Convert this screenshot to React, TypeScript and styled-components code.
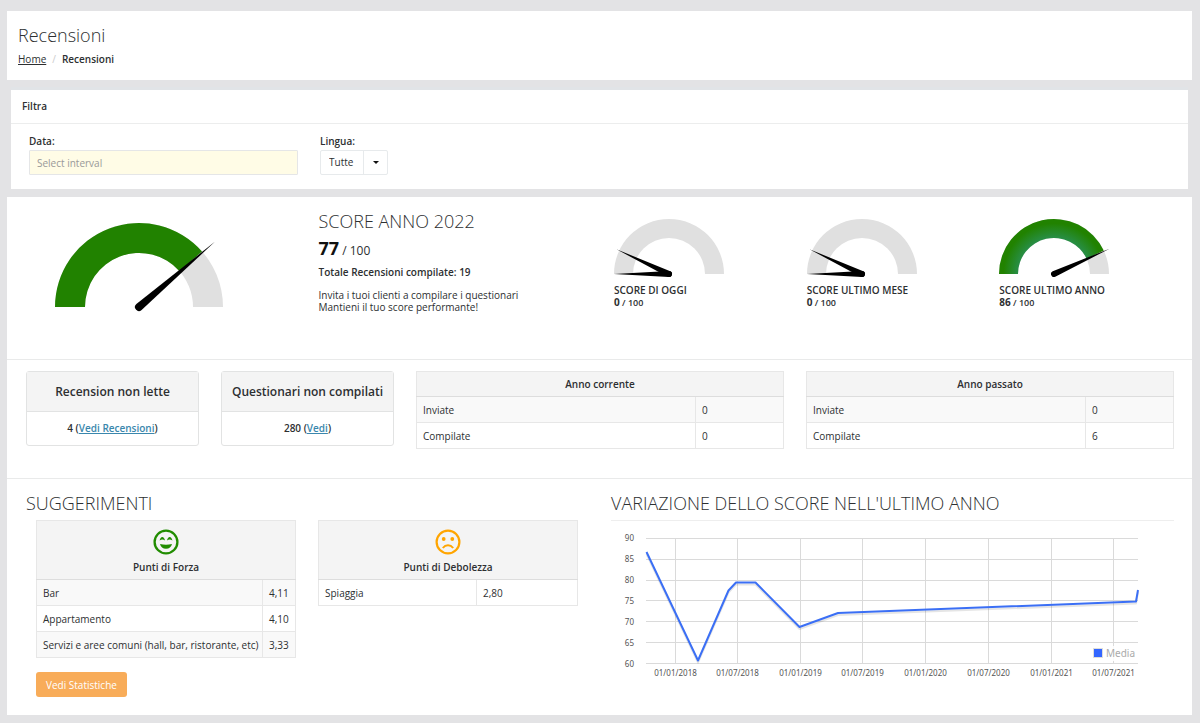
import React, { useId } from "react";
import styled, { createGlobalStyle } from "styled-components";

const GlobalStyle = createGlobalStyle`
  *, *::before, *::after { box-sizing: border-box; }
  body {
    margin: 0;
    background: #e3e3e5;
    color: #2d2f31;
    font-family: "Open Sans", "Noto Sans", "Liberation Sans", sans-serif;
    font-size: 10px;
    line-height: 14px;
  }
  h1, h2, h3, p, ol { margin: 0; padding: 0; }
`;

const Page = styled.div`
  display: flex;
  flex-direction: column;
  padding: 11px 8px 8px 7px;
`;

const PageHeader = styled.header`
  padding: 12px 11px 14px;
  background: #fff;
`;

const Title = styled.h1`
  font-size: 18px;
  font-weight: 300;
  line-height: 24px;
`;

const Breadcrumb = styled.ol`
  display: flex;
  padding-top: 5px;
  list-style: none;
  line-height: 14px;

  li + li::before {
    content: "/";
    padding: 0 6px;
    color: #ccc;
    font-weight: 400;
  }
  li[aria-current] { font-weight: 600; }
  a { color: inherit; }
`;

const FilterPanel = styled.section`
  margin: 7px 4px 8px;
  border-top: 3px solid #e1e4e7;
  background: #fff;
`;

const FilterTitle = styled.h2`
  padding: 9px 11px 10px;
  border-bottom: 1px solid #eceded;
  font-size: 10px;
  font-weight: 600;
  line-height: 14px;
`;

const FilterForm = styled.form`
  display: flex;
  gap: 22px;
  padding: 10px 18px 14px;
`;

const Field = styled.div`
  display: flex;
  flex-direction: column;
  gap: 2px;
`;

const FieldLabel = styled.label`
  font-weight: 600;
  line-height: 14px;
`;

const DateInput = styled.input`
  width: 269px;
  height: 25px;
  padding: 0 7px;
  border: 1px solid #e5e6e7;
  border-radius: 1px;
  background: #fffce6;
  font: inherit;

  &::placeholder { color: #999; opacity: 1; }
`;

const SelectBox = styled.div`
  position: relative;
  width: 68px;
`;

const LanguageSelect = styled.select`
  width: 100%;
  height: 25px;
  padding: 0 26px 1px 8px;
  appearance: none;
  border: 1px solid #e7eaec;
  border-radius: 2px;
  background: #fff;
  color: inherit;
  font: inherit;
`;

const Caret = styled.span`
  position: absolute;
  inset: 0 0 0 auto;
  display: grid;
  place-items: center;
  width: 25px;
  border-left: 1px solid #e7eaec;
  pointer-events: none;

  &::before {
    content: "";
    border: 3px solid transparent;
    border-top-color: #111;
    border-bottom: 0;
  }
`;

const Dashboard = styled.main`
  background: #fff;
`;

const Row = styled.section<{ $height: number }>`
  display: grid;
  grid-template-columns: repeat(12, minmax(0, 1fr));
  align-items: start;
  column-gap: 22px;
  min-height: ${(p) => p.$height}px;
  padding: 11px 18px 17px 19px;

  & + & { border-top: 1px solid #e9eaea; }
`;

const Col = styled.div<{ $span: number }>`
  grid-column: span ${(p) => p.$span};
`;

const WideCol = styled(Col)`
  padding-top: 1px;
`;

const GaugeCol = styled(Col)`
  display: flex;
  justify-content: center;
  padding: 15px 44px 0 0;
`;

const GaugeSvg = styled.svg`
  display: block;
  overflow: visible;
`;

const ScoreCol = styled(Col)`
  padding-top: 1px;
`;

const SectionTitle = styled.h2`
  font-size: 18px;
  font-weight: 300;
  line-height: 24px;
`;

const Score = styled.p`
  padding: 3px 0 2px;
  font-size: 12px;
  line-height: 24px;

  strong { font-size: 18px; font-weight: 700; color: #111; }
`;

const Total = styled.p`
  padding-bottom: 10px;
  font-weight: 600;
  line-height: 14px;
`;

const Invite = styled.p`
  line-height: 12px;
`;

const MiniGauges = styled(Col)`
  display: grid;
  grid-template-columns: repeat(3, minmax(0, 1fr));
  padding: 11px 0 0 3px;
  column-gap: 18px;
`;

const MiniLabel = styled.h3`
  padding-top: 9px;
  font-size: 10px;
  font-weight: 600;
  line-height: 12px;
`;

const MiniScore = styled.p`
  font-size: 9px;
  font-weight: 600;
  line-height: 12px;

  strong { font-size: 10px; font-weight: 700; }
`;

const Card = styled.article`
  border: 1px solid #e2e3e3;
  border-radius: 3px;
  text-align: center;
`;

const CardTitle = styled.h3`
  border-bottom: 1px solid #e2e3e3;
  background: #f4f4f4;
  font-size: 12px;
  font-weight: 600;
  line-height: 39px;
`;

const CardBody = styled.p`
  font-weight: 600;
  line-height: 33px;

  a { color: #3a87ad; }
`;

const DataTable = styled.table<{ $valueWidth: string }>`
  width: 100%;
  border-collapse: collapse;
  table-layout: fixed;

  col:last-child { width: ${(p) => p.$valueWidth}; }
  th, td {
    height: 26px;
    padding: 5px 6px;
    border: 1px solid #e7e7e7;
    text-align: left;
    white-space: nowrap;
  }
  thead th {
    height: 25px;
    border-bottom-color: #ddd;
    background: #f4f4f4;
    font-weight: 600;
    text-align: center;
  }
  tbody th { font-weight: 400; }
`;

const StripedTable = styled(DataTable)`
  tbody tr:nth-child(odd) { background: #f9f9f9; }
`;

const HeadIcon = styled.svg`
  display: block;
  margin: 3px auto 5px;
`;

const Tips = styled.div`
  display: grid;
  grid-template-columns: repeat(2, minmax(0, 1fr));
  align-items: start;
  gap: 14px 22px;
  padding: 5px 11px 0 10px;
`;

const StatsButton = styled.button`
  justify-self: start;
  height: 25px;
  padding: 0 10px;
  border: 0;
  border-radius: 3px;
  background: #f8ac59;
  color: #fff;
  font: inherit;
  cursor: pointer;
`;

const ChartTitle = styled(SectionTitle)`
  padding-bottom: 5px;
  border-bottom: 1px solid #eee;
`;

const ChartSvg = styled.svg`
  display: block;
  width: 100%;
  margin-top: 6px;
  font-family: "Noto Sans", "Open Sans", sans-serif;
  font-size: 8px;
  fill: #555;
`;

type GaugeProps = {
  radius: number;
  inner: number;
  value: number;
  needle: number;
  hub: number;
  shaded?: boolean;
};

function Gauge({ radius, inner, value, needle, hub, shaded }: GaugeProps) {
  const gradientId = useId();
  const point = (r: number, v: number) => {
    const a = Math.PI * (1 - v / 100);
    return `${radius + r * Math.cos(a)} ${radius - r * Math.sin(a)}`;
  };
  const band = (from: number, to: number) =>
    `M${point(radius, from)}A${radius} ${radius} 0 0 1 ${point(radius, to)}` +
    `L${point(inner, to)}A${inner} ${inner} 0 0 0 ${point(inner, from)}Z`;
  const hand = (v: number, length: number) => {
    const turn = (v / 100) * 180 - 180;
    return (
      <g transform={`translate(${radius} ${radius}) rotate(${turn})`}>
        <path d={`M0 ${-hub}L${length} 0L0 ${hub}A${hub} ${hub} 0 0 1 0 ${-hub}Z`} />
      </g>
    );
  };
  return (
    <GaugeSvg width={radius * 2} height={radius + 1} role="img" aria-label={`${value} / 100`}>
      <defs>
        <radialGradient id={gradientId} gradientUnits="userSpaceOnUse" cx={radius} cy={radius} r={radius}>
          <stop offset="0.62" stopColor="#299050" />
          <stop offset="0.92" stopColor="#218200" />
        </radialGradient>
      </defs>
      <path d={band(0, 100)} fill="#e0e0e0" />
      {value > 0 && <path d={band(0, value)} fill={shaded ? `url(#${gradientId})` : "#218200"} />}
      {value === 0 && hand(0, radius)}
      {hand(value === 0 ? 14 : value + 0.4, needle)}
    </GaugeSvg>
  );
}

const miniGauges = [
  { label: "SCORE DI OGGI", value: 0, needle: 58 },
  { label: "SCORE ULTIMO MESE", value: 0, needle: 58 },
  { label: "SCORE ULTIMO ANNO", value: 86, needle: 61 },
];

type TableProps = {
  head: React.ReactNode;
  rows: [string, string][];
  valueWidth: string;
  striped?: boolean;
};

function ValueTable({ head, rows, valueWidth, striped = true }: TableProps) {
  const Table = striped ? StripedTable : DataTable;
  return (
    <Table $valueWidth={valueWidth}>
      <colgroup>
        <col />
        <col />
      </colgroup>
      <thead>
        <tr>
          <th colSpan={2} scope="colgroup">{head}</th>
        </tr>
      </thead>
      <tbody>
        {rows.map(([name, value]) => (
          <tr key={name}>
            <th scope="row">{name}</th>
            <td>{value}</td>
          </tr>
        ))}
      </tbody>
    </Table>
  );
}

function HappyIcon() {
  return (
    <HeadIcon width="26" height="26" viewBox="0 0 26 26" fill="#218c00" aria-hidden="true">
      <circle cx="13" cy="13" r="11.4" fill="none" stroke="#218c00" strokeWidth="2.3" />
      <path d="M6.6 11.6Q7.4 8 9.3 8Q11.2 8 12 11.6Q9.3 9.6 6.6 11.6Z" />
      <path d="M14 11.6Q14.8 8 16.7 8Q18.6 8 19.4 11.6Q16.7 9.6 14 11.6Z" />
      <path d="M7 15Q13 16.4 19 15Q17.8 19.8 13 19.8Q8.2 19.8 7 15Z" />
    </HeadIcon>
  );
}

function SadIcon() {
  return (
    <HeadIcon width="26" height="26" viewBox="0 0 26 26" fill="#ffa500" aria-hidden="true">
      <circle cx="13" cy="13" r="11.4" fill="none" stroke="#ffa500" strokeWidth="2.2" />
      <circle cx="8.7" cy="10" r="1.9" />
      <circle cx="17.3" cy="10" r="1.9" />
      <path d="M7.8 19Q10 16.2 13 16.2Q16 16.2 18.2 19" fill="none" stroke="#ffa500" strokeWidth="2" />
    </HeadIcon>
  );
}

const yTicks = [90, 85, 80, 75, 70, 65, 60];
const xTicks: [number, string][] = [
  [64.5, "01/01/2018"],
  [126.5, "01/07/2018"],
  [189.5, "01/01/2019"],
  [251.5, "01/07/2019"],
  [314.5, "01/01/2020"],
  [377.5, "01/07/2020"],
  [440.5, "01/01/2021"],
  [502.5, "01/07/2021"],
];
const seriesPath = "M35.5 25L87 133.5L117.5 63.5L125 55.5H144.5L188.5 100L227 86L525 74.5L527 63";

function ScoreChart() {
  return (
    <ChartSvg viewBox="0 0 563 155" role="img" aria-label="Media">
      <g stroke="#dadada">
        {yTicks.map((tick, i) => (
          <path key={tick} d={`M35 ${Math.round(11 + i * 20.8) + 0.5}H527`} />
        ))}
        {xTicks.map(([x, label]) => (
          <path key={label} d={`M${x} 11.5V136`} />
        ))}
      </g>
      {yTicks.map((tick, i) => (
        <text key={tick} x="23" y={14 + i * 21} textAnchor="end">{tick}</text>
      ))}
      {xTicks.map(([x, label]) => (
        <text key={label} x={x} y="149" textAnchor="middle">{label}</text>
      ))}
      <g fill="none" strokeLinejoin="round">
        <path d={seriesPath} transform="translate(0 2)" stroke="#000" strokeOpacity="0.1" strokeWidth="2" />
        <path d={seriesPath} stroke="#3b6ff5" strokeWidth="2" />
      </g>
      <rect x="480" y="119" width="46" height="15" fill="#fff" fillOpacity="0.85" />
      <rect x="482.5" y="121.5" width="9" height="9" fill="#fff" stroke="#ddd" />
      <rect x="483" y="122" width="8" height="8" fill="#36f" />
      <text x="495" y="130" fontSize="10" fill="#aaa">Media</text>
    </ChartSvg>
  );
}

export default function App() {
  return (
    <>
      <GlobalStyle />
      <Page>
        <PageHeader>
          <Title>Recensioni</Title>
          <nav aria-label="Breadcrumb">
            <Breadcrumb>
              <li><a href="#home">Home</a></li>
              <li aria-current="page">Recensioni</li>
            </Breadcrumb>
          </nav>
        </PageHeader>

        <FilterPanel>
          <FilterTitle>Filtra</FilterTitle>
          <FilterForm>
            <Field>
              <FieldLabel htmlFor="interval">Data:</FieldLabel>
              <DateInput id="interval" type="text" placeholder="Select interval" />
            </Field>
            <Field>
              <FieldLabel htmlFor="language">Lingua:</FieldLabel>
              <SelectBox>
                <LanguageSelect id="language">
                  <option>Tutte</option>
                </LanguageSelect>
                <Caret aria-hidden="true" />
              </SelectBox>
            </Field>
          </FilterForm>
        </FilterPanel>

        <Dashboard>
          <Row $height={162}>
            <GaugeCol $span={3}>
              <Gauge radius={84} inner={54} value={77} needle={100} hub={4} />
            </GaugeCol>
            <ScoreCol $span={3}>
              <SectionTitle>SCORE ANNO 2022</SectionTitle>
              <Score><strong>77</strong> / 100</Score>
              <Total>Totale Recensioni compilate: 19</Total>
              <Invite>
                Invita i tuoi clienti a compilare i questionari
                <br />
                Mantieni il tuo score performante!
              </Invite>
            </ScoreCol>
            <MiniGauges $span={6}>
              {miniGauges.map(({ label, value, needle }) => (
                <div key={label}>
                  <Gauge radius={55} inner={36} value={value} needle={needle} hub={3} shaded />
                  <MiniLabel>{label}</MiniLabel>
                  <MiniScore><strong>{value}</strong> / 100</MiniScore>
                </div>
              ))}
            </MiniGauges>
          </Row>

          <Row $height={119}>
            <Col $span={2}>
              <Card>
                <CardTitle>Recension non lette</CardTitle>
                <CardBody>4 (<a href="#recensioni">Vedi Recensioni</a>)</CardBody>
              </Card>
            </Col>
            <Col $span={2}>
              <Card>
                <CardTitle>Questionari non compilati</CardTitle>
                <CardBody>280 (<a href="#questionari">Vedi</a>)</CardBody>
              </Card>
            </Col>
            <Col $span={4}>
              <ValueTable head="Anno corrente" valueWidth="24%" rows={[["Inviate", "0"], ["Compilate", "0"]]} />
            </Col>
            <Col $span={4}>
              <ValueTable head="Anno passato" valueWidth="24%" rows={[["Inviate", "0"], ["Compilate", "6"]]} />
            </Col>
          </Row>

          <Row $height={237}>
            <WideCol $span={6}>
              <SectionTitle>SUGGERIMENTI</SectionTitle>
              <Tips>
                <ValueTable
                  head={<><HappyIcon />Punti di Forza</>}
                  valueWidth="33px"
                  rows={[
                    ["Bar", "4,11"],
                    ["Appartamento", "4,10"],
                    ["Servizi e aree comuni (hall, bar, ristorante, etc)", "3,33"],
                  ]}
                />
                <ValueTable
                  head={<><SadIcon />Punti di Debolezza</>}
                  valueWidth="39%"
                  striped={false}
                  rows={[["Spiaggia", "2,80"]]}
                />
                <StatsButton type="button">Vedi Statistiche</StatsButton>
              </Tips>
            </WideCol>
            <WideCol $span={6}>
              <ChartTitle>VARIAZIONE DELLO SCORE NELL'ULTIMO ANNO</ChartTitle>
              <ScoreChart />
            </WideCol>
          </Row>
        </Dashboard>
      </Page>
    </>
  );
}
